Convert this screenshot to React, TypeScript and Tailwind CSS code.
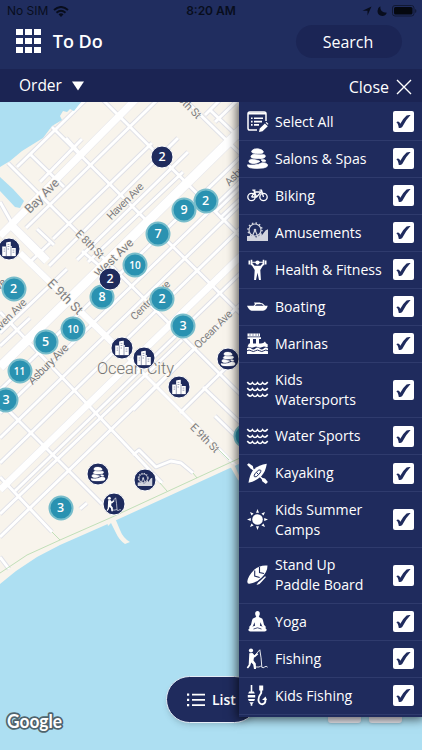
import { useState } from 'react'
import type { ReactNode } from 'react'

type IconName =
  | 'list' | 'stones' | 'bike' | 'ferris' | 'fitness' | 'boat' | 'marina' | 'waves'
  | 'kayak' | 'sun' | 'board' | 'yoga' | 'fishing' | 'tackle' | 'building'

// All icons share a 21x21 box
const icons: Record<IconName, ReactNode> = {
  list: (
    <>
      <path d="M19 10V2.8Q19 1 17.2 1H2.8Q1 1 1 2.8v14.4Q1 19 2.8 19H10" fill="none" stroke="currentColor" strokeWidth="1.5" />
      <path d="M1 1.5h18v2H1zM4 6.5h1.6v1.6H4zM7 6.5h9v1.6H7zM4 9.8h1.6v1.6H4zM7 9.8h8v1.6H7zM4 13.1h1.6v1.6H4zM7 13.1h5v1.6H7z" />
      <path d="M12 21l.7-3.6 5.2-5 2.9 2.9-5.2 5zM18.6 11.7l.9-.8 2 2-.8.9z" />
    </>
  ),
  stones: (
    <g stroke="currentColor" strokeWidth=".7" strokeLinejoin="round">
      <path d="M5 2.6Q7 .2 11 .8q4.500.6 5.300 2.700.3 1.700-1.900 1.900Q9 5.800 6 5.100 3.800 4.300 5 2.600zM4.300 7.600Q6 5.800 9 6.600q5 .3 8.400.1 1.600 1.100.6 2.500-1.500 1.700-6 1.400Q6 10.500 4.500 9.700 3.400 8.800 4.300 7.600zM1.800 12.800Q3 10.500 6.500 11.400q5.500 1 6.500 2-3.200 2.400-7 2.200-4.500-.5-4.200-2.800zM14 11.800q2.800-.7 4.300.3 1 1.300-.8 1.700-2.700.2-3.500-2zM.6 16.800Q3 17.300 7 17q5-.4 8-2.200 4.500-.3 5.700 2 .3 2.500-4.200 3.200-8 .9-13.500-.2-3-.9-2.400-3z" />
    </g>
  ),
  bike: (
    <g fill="none" stroke="currentColor" strokeWidth="1.300">
      <circle cx="4.500" cy="12" r="3.700" />
      <circle cx="16.500" cy="12" r="3.700" />
      <path d="M4.500 12l3.300-5h6.400L9.500 12h-5M6.800 5.200L9.500 12M12.500 5.200h2l2 6.800M5.300 5.200h3.200" />
    </g>
  ),
  ferris: (
    <g opacity=".8">
      <circle cx="8" cy="8" r="6" fill="none" stroke="currentColor" strokeWidth="1.200" />
      <circle cx="8" cy="8" r="7" fill="none" stroke="currentColor" strokeWidth="1.500" strokeDasharray="1.500 2.200" />
      <path d="M8 8L5 15M8 8l3 7" fill="none" stroke="currentColor" strokeWidth="1.200" />
      <circle cx="8" cy="8" r="1.300" />
      <path d="M0 14h7l2 1.500q3-.5 4.500-4.200l1.200.1v2.200l4-5.400 2.300-1V19H0z" />
    </g>
  ),
  fitness: (
    <>
      <circle cx="10.500" cy="3.600" r="2.100" />
      <path d="M1.500 1.500h1.700v4H1.500zM3.700.7h1.600v5.500H3.700zM15.700.7h1.600v5.500h-1.600zM17.800 1.500h1.700v4h-1.700zM5 2.800h11v1H5z" />
      <path d="M3.700 4.500h1.800l2 2.200h6l2-2.200h1.800l-2.800 4.400-1.200 2.100.6 10H12l-1.500-7.300L9 21H7.100l.6-10-1.200-2.100z" />
    </>
  ),
  boat: (
    <>
      <path d="M0 9.800h20.700q-1.200 4.700-4.700 5H4.500Q2 14.200 0 9.800z" />
      <path d="M7 9.800l2.200-2h6l2.300 2" fill="none" stroke="currentColor" strokeWidth="1.100" />
      <path d="M7 6.400h6l2 1.700H7.800z" />
    </>
  ),
  marina: (
    <>
      <path d="M.5.500H13v3H.5zM.5 4.200H14V6H.5zM3 5h3v8H3zM9 5h3v8H9z" />
      <path d="M2 10.500h12q2.500 0 4-2 .5 2.300 2.700 2.800v3L17 13.500l-4 1.300-4-1.300-4 1.300-4.500-1.300z" />
      <path d="M0 15.500q2-1.800 4.200 0t4.200 0 4.200 0 4.200 0 4.200 0V21H0z" />
      <path d="M0 17.800q2-1.500 4.200 0t4.200 0 4.200 0 4.200 0 4.200 0" fill="none" stroke="#1f2b5d" strokeWidth="1" />
      <path d="M3 .500v2.500M6 .500v2.500M9 .500v2.500M11.500 .500v2.500" stroke="#1f2b5d" strokeWidth=".5" />
    </>
  ),
  waves: (
    <g fill="none" stroke="currentColor" strokeWidth="1.600">
      <path d="M.3 3q2.600 4 5.100.6 2.600 3.800 5.100 0 2.500 3.800 5.100 0 2.500 3.400 5.100-.6" />
      <path d="M.3 9q2.600 4 5.100.6 2.600 3.800 5.100 0 2.500 3.800 5.100 0 2.500 3.400 5.100-.6" />
      <path d="M.3 15q2.600 4 5.100.6 2.600 3.800 5.100 0 2.500 3.800 5.100 0 2.500 3.400 5.100-.6" />
    </g>
  ),
  kayak: (
    <>
      <path d="M19.800.800Q10.500 2 5.500 8 2.500 12.500 1.500 19.800 9 18 14.500 13q4.300-4.800 5.300-12.200z" />
      <path d="M3.500 4L17 17.500" stroke="currentColor" strokeWidth="1.500" />
      <path d="M0 1.800L1.800.300l4 2.700.8 3.500L4 6zM14.500 14.800l3.500.6 2.900 3.700-2 1.800-3.700-2.700z" />
      <ellipse cx="10.500" cy="10.400" rx="4.500" ry="1.700" fill="none" stroke="#1f2b5d" strokeWidth=".9" transform="rotate(-48 10.500 10.400)" />
      <path d="M9.500 9.500l2 2" stroke="#1f2b5d" strokeWidth="1" />
    </>
  ),
  sun: (
    <>
      <circle cx="10.500" cy="10.500" r="5.300" />
      <path d="M9 3.800L10.500 0 12 3.800zM9 17.200l1.500 3.800 1.500-3.800zM3.800 9L0 10.500 3.800 12zM17.200 9l3.800 1.500-3.800 1.500zM4.500 6.600L3 3l3.600 1.500zM14.400 4.500L18 3l-1.500 3.600zM4.500 14.400L3 18l3.600-1.500zM14.400 16.500L18 18l-1.500-3.600z" />
    </>
  ),
  board: (
    <>
      <path d="M20.500.500Q12.500-.3 7 5 1 11 .3 16.500q0 2.500 2 2.200 7-.8 12.400-6.300Q20.500 7 20.500.500z" />
      <path d="M12.500 2v5.500l4.500 1M7.700 5.500V11l5 1.500" fill="none" stroke="#1f2b5d" strokeWidth="1.100" />
      <path d="M9.500 20q1-3 4-4.600l4.500-4.200 1 .9-4.300 4.600Q12.500 20 9.500 20z" />
    </>
  ),
  yoga: (
    <>
      <ellipse cx="10.500" cy="2.800" rx="2.300" ry="2.700" />
      <path d="M9.300 5h2.400q.2 1.500 2.300 2 1.700.4 2 2.500l1 4.300 2.200 2.400-1.200.9-3-2.200-1.500-3.600-.6 3.500q5.700 1.300 6.700 3.800.3 1.900-2 1.900H3.400q-2.300 0-2-1.900 1-2.500 6.700-3.800l-.6-3.500L6 14.900l-3 2.200-1.200-.9L4 13.800l1-4.300Q5.300 7.400 7 7q2.100-.5 2.300-2z" />
      <path d="M6.500 18l4-1.200 4 1.200" fill="none" stroke="#1f2b5d" strokeWidth=".8" />
    </>
  ),
  fishing: (
    <>
      <circle cx="4" cy="2.500" r="2.100" />
      <path d="M2.300 5.200l3.200-.2 2 2.300 3-2 .8 1-3.300 3-1 .2-.5 3 2.300 3L9 21H7l-.8-4.500-2-2-1 3.200L1 20.500l-1.300-1 2-2.800z" />
      <path d="M6 9.500L12.800 1.800q1.500 7.500 2 17M7 19h5q1.500-1.500 2.800 0t2.800 0 3 .2" fill="none" stroke="currentColor" strokeWidth=".9" />
    </>
  ),
  tackle: (
    <>
      <path d="M3.700 0h1.600v7H3.700zM2.200 6.500h4.600l1 2H1.200zM.8 10h7.400v2.500H.8zM1 14h7l-.8 2H1.800zM2.300 17.300h4.400L5.300 19v1.800H3.700V19z" />
      <path d="M14.200 5v3q-2.800 3.500-2.800 7 .5 4.200 4 4.200 3.200-.4 3-4.400" fill="none" stroke="currentColor" strokeWidth="1.900" />
      <path d="M12.200.500h4v5h-4zM20 15l-1.500-3.500-3.500 3.500z" />
    </>
  ),
  building: (
    <>
      <path d="M1 7h5.500V1.500L13 0v6.300h1.500V9H20v11.500H1z" />
      <path d="M8.500 4h2.500M8.500 7h2.500M3 10.500h2M3 13.500h2M8.500 10.500h2M15.500 12h2.500M15.500 15h2.500" stroke="#1f2b5d" strokeWidth=".9" strokeOpacity=".7" />
      <path d="M6.700 7v13.500M13.300 7v13.500" stroke="#1f2b5d" strokeWidth=".8" strokeOpacity=".8" />
    </>
  ),
}

function Icon({ name, className }: { name: IconName; className?: string }) {
  return (
    <svg viewBox="0 0 21 21" fill="currentColor" className={className}>
      {icons[name]}
    </svg>
  )
}

const categories: { label: string; icon: IconName; tall?: boolean }[] = [
  { label: 'Select All', icon: 'list' },
  { label: 'Salons & Spas', icon: 'stones' },
  { label: 'Biking', icon: 'bike' },
  { label: 'Amusements', icon: 'ferris' },
  { label: 'Health & Fitness', icon: 'fitness' },
  { label: 'Boating', icon: 'boat' },
  { label: 'Marinas', icon: 'marina' },
  { label: 'Kids Watersports', icon: 'waves', tall: true },
  { label: 'Water Sports', icon: 'waves' },
  { label: 'Kayaking', icon: 'kayak' },
  { label: 'Kids Summer Camps', icon: 'sun', tall: true },
  { label: 'Stand Up Paddle Board', icon: 'board', tall: true },
  { label: 'Yoga', icon: 'yoga' },
  { label: 'Fishing', icon: 'fishing' },
  { label: 'Kids Fishing', icon: 'tackle' },
]

const clusters = [
  { x: 246, y: 436, n: 2 },
  { x: 205.5, y: 200.5, n: 2 },
  { x: 184, y: 210, n: 9 },
  { x: 158, y: 233.5, n: 7 },
  { x: 135, y: 264.5, n: 10 },
  { x: 102, y: 297, n: 8 },
  { x: 162, y: 299, n: 2 },
  { x: 183, y: 326, n: 3 },
  { x: 73, y: 329, n: 10 },
  { x: 45.5, y: 341.5, n: 5 },
  { x: 19.5, y: 371, n: 11 },
  { x: 6, y: 400, n: 3 },
  { x: 13.5, y: 288.5, n: 2 },
  { x: 60.5, y: 507.5, n: 3 },
  { x: 162, y: 157, n: 2, dark: true },
  { x: 110, y: 279, n: 2, dark: true },
]

const places: { x: number; y: number; icon: IconName }[] = [
  { x: 9, y: 248.5, icon: 'building' },
  { x: 121.5, y: 348, icon: 'building' },
  { x: 144, y: 358, icon: 'building' },
  { x: 178.5, y: 386.5, icon: 'building' },
  { x: 228, y: 359, icon: 'stones' },
  { x: 98, y: 473.5, icon: 'stones' },
  { x: 145, y: 480, icon: 'ferris' },
  { x: 113.5, y: 503.5, icon: 'fishing' },
]

const minorRoads = [
  // avenues
  'M17 167L100 86', 'M40 182L82 139', 'M26 228L188 70', 'M30 262L50 243M53 239L152 143',
  'M49 266L178 138', 'M0 333L67 269M77 260L188 152', 'M0 346L30 318M88 262L183 172',
  'M0 390L250 148', 'M0 413L250 172', 'M0 438L250 195', 'M0 463L250 219',
  'M15 491L250 264', 'M0 514L182 340', 'M0 537L250 295', 'M180 413L250 344',
  'M203 387L250 432', 'M133 410L193 350',
  // streets
  'M0 202L13 225', 'M8 163L250 404', 'M30 154L64 187', 'M52 127L250 323',
  'M66 138L83 157', 'M103 100L250 246', 'M180 95L250 163', 'M0 312L162 483',
  'M0 402L102 504', 'M0 477L52 532', 'M0 557L9 569', 'M215 416L250 450',
  'M27 238L44 255M37 229L54 245', 'M210 110L250 148M205 115L222 98M215 122L240 98',
  'M215 212L240 188M220 218L250 190', 'M82 251L101 267',
  'M133 455L139 450L156 467L171 461L181 463L193 473', 'M80 509L87 503',
]

const majorRoads = [
  { d: 'M0 236L136 99', w: 7 },
  { d: 'M0 367L250 121', w: 9 },
  { d: 'M0 490L250 247', w: 6.5 },
  { d: 'M12 226L47 261', w: 8 },
  { d: 'M20 253L115 345', w: 6 },
  { d: 'M115 345L183 413L240 470', w: 3 },
]

const labels = [
  { t: 'Bay Ave', x: 42, y: 196, r: -45, s: 12.5, w: 43 },
  { t: 'Haven Ave', x: 125, y: 201, r: -45, s: 11, w: 47 },
  { t: 'E 8th St', x: 90, y: 244, r: 45, s: 11, w: 35 },
  { t: 'E 9th St', x: 65, y: 297, r: 45, s: 13, w: 44 },
  { t: 'West Ave', x: 114, y: 258, r: -45, s: 12, w: 49 },
  { t: 'Central Ave', x: 150, y: 300, r: -45, s: 10.5, w: 51 },
  { t: 'Ocean Ave', x: 213, y: 329, r: -45, s: 11, w: 49 },
  { t: 'Asbury Ave', x: 48, y: 364, r: -45, s: 11.5, w: 52 },
  { t: 'Haven Ave', x: 7, y: 318, r: -45, s: 11, w: 50 },
  { t: 'E 9th St', x: 205, y: 438, r: 45, s: 11, w: 36 },
  { t: 'E 6th St', x: 187, y: 104, r: 45, s: 11, w: 36 },
  { t: 'Asbury Ave', x: 244, y: 166, r: -45, s: 11, w: 50 },
  { t: 'Haven Ave', x: -13, y: 297, r: -45, s: 11, w: 48 },
]

function CityMap() {
  return (
    <svg viewBox="0 102 422 648" className="block h-[648px] w-[422px]">
      <rect y="102" width="422" height="648" fill="#f8f4ec" />
      <g fill="none" strokeLinejoin="round">
        {minorRoads.map((d) => <path key={d} d={d} stroke="#dfe0e7" strokeWidth="4.600" />)}
        {majorRoads.map((r) => <path key={r.d} d={r.d} stroke="#e8e8ec" strokeWidth={r.w + 1.2} />)}
        {minorRoads.map((d) => <path key={d} d={d} stroke="#fff" strokeWidth="2.900" />)}
        {majorRoads.map((r) => <path key={r.d} d={r.d} stroke="#fff" strokeWidth={r.w} />)}
      </g>
      <path d="M0 102H81L74 111L70 109L67 112L63 111L60 116L62 120L52 126L43 138L22 151L10 161L0 167Z" fill="#addff2" />
      <path d="M0 177L13 189L24 201L20 208L15 207L0 191Z" fill="#addff2" />
      <path d="M0 584L16 571L37 557L60 545L110 523L230 468L422 382V750H0Z" fill="#addff2" />
      <path d="M0 573L27 555L60 540L110 518L240 458M52 532L60 540M160 483L167 491M193 473L197 478M218 449L229 460" fill="none" stroke="#b3d9ab" strokeWidth=".8" />
      <path d="M107 522L115 518L120 530Q123 538 130 542L125 544Q119 540 116 533L111 523L108 526ZM230 466L234 464L242 482L238 480Z" fill="#f8f4ec" />
      <g fill="#7d7d80" stroke="#f8f4ec" strokeWidth="1.500" paintOrder="stroke" textAnchor="middle" fontFamily="Roboto, sans-serif">
        {labels.map((l) => (
          <text key={`${l.t}${l.x}`} transform={`translate(${l.x} ${l.y}) rotate(${l.r})`} y="4" fontSize={l.s} textLength={l.w}>
            {l.t}
          </text>
        ))}
        <text x="135.500" y="374" fontSize="16.500" textLength="77" fontWeight="300" fill="#747474">Ocean City</text>
      </g>
    </svg>
  )
}

function FilterRow({ label, icon, tall }: { label: string; icon: IconName; tall?: boolean }) {
  const [checked, setChecked] = useState(true)

  return (
    <li className={`flex shrink-0 items-center border-b border-[#2f3b6d] pl-[7.500px] pr-[8.500px] ${tall ? 'h-[55.700px]' : 'h-[37px]'}`}>
      <Icon name={icon} className="h-[21px] w-[21px] shrink-0 overflow-visible" />
      <span className="ml-[7.500px] w-[109px] text-[14.100px] leading-5">{label}</span>
      <button
        aria-label={label}
        onClick={() => setChecked(!checked)}
        className="ml-auto h-[20.500px] w-[20.500px] shrink-0 rounded-[2px] bg-white text-[#1f2b5d]"
      >
        {checked && (
          <svg viewBox="0 0 20.500 20.500" fill="currentColor" className="block h-full w-full">
            <path d="M3.300 11.200Q5.800 9.200 7.300 12.800Q10.600 7 13.600 4.600Q15.200 3.700 17.600 4Q13 8.400 9.200 16Q7.700 17.600 5.800 16.900Q5.200 12.500 3.300 11.200Z" />
          </svg>
        )}
      </button>
    </li>
  )
}

export default function App() {
  return (
    <div className="relative flex h-[750px] w-[422px] flex-col overflow-hidden bg-[#addff2] font-['Open_Sans',sans-serif] text-white">
      <header className="relative z-10 flex h-[69px] shrink-0 flex-col bg-[#202d5f]">
        {/* Status bar */}
        <div className="grid h-[22px] grid-cols-3 items-center pl-[7px] pr-[5px] font-['Inter',sans-serif] text-[12px] text-[#080d1d]">
          <div className="flex items-center gap-[5px]">
            <span>No SIM</span>
            <svg viewBox="0 0 16 11" className="h-[11px] w-4" fill="none" stroke="currentColor" strokeWidth="2">
              <path d="M1 4q7-6 14 0M3.500 6.700q4.500-3.800 9 0" />
              <path d="M5.500 8.200q2.500-1.800 5 0L8 11z" fill="currentColor" stroke="none" />
            </svg>
          </div>
          <span className="pr-[2px] text-center font-semibold">8:20 AM</span>
          <div className="flex items-center justify-end gap-[5px]">
            <svg viewBox="0 0 10 10" className="h-[10px] w-[10px]" fill="currentColor">
              <path d="M9.500.500L5.500 9.500V4.700H.500z" />
            </svg>
            <svg viewBox="0 0 10 10" className="h-[10px] w-[10px]" fill="currentColor">
              <path d="M3.300.300Q2.700 6.700 9.800 6.700 8.500 10 5.300 10 .500 9.700.500 5 .700 1.500 3.300.300z" />
            </svg>
            <svg viewBox="0 0 25 12" className="h-3 w-[25px]">
              <rect x=".5" y=".5" width="21.500" height="10.500" rx="2.500" fill="none" stroke="#111934" />
              <rect x="2" y="2" width="18.500" height="7.500" rx="1.500" fill="#05080f" />
              <path d="M23.200 4v4q1.200-.5 1.200-2t-1.200-2z" fill="#111934" />
            </svg>
          </div>
        </div>
        <div className="flex h-[38px] items-center pl-4 pr-5">
          <div className="grid grid-cols-3 gap-[2.500px]">
            {[...Array(9)].map((_, i) => (
              <span key={i} className="h-[6.600px] w-[6.600px] bg-white" />
            ))}
          </div>
          <h1 className="ml-3 text-[18px] font-semibold">To Do</h1>
          <button className="ml-auto h-[33px] w-[106px] rounded-full bg-[#1b2555] pr-[2px] pt-[2px] text-[16px]">Search</button>
        </div>
      </header>

      <div className="relative z-10 flex h-[33px] shrink-0 items-center justify-between bg-[#1b2453] pl-[19px] pr-[10px]">
        <button className="flex items-center gap-[10px] text-[15.500px]">
          Order
          <svg viewBox="0 0 12 10" className="h-[10px] w-3" fill="currentColor">
            <path d="M0 .500h12L6 9.500z" />
          </svg>
        </button>
        <button className="flex items-center gap-[7px] pt-[2px] text-[16px]">
          Close
          <svg viewBox="0 0 16 16" className="h-4 w-4" stroke="currentColor" strokeWidth="1.400">
            <path d="M1 1l14 14M15 1L1 15" />
          </svg>
        </button>
      </div>

      <main className="relative h-[648px]">
        <CityMap />

        {/* Map pins, coordinates are relative to the screen */}
        {clusters.map((c) => (
          <div
            key={`${c.x}-${c.y}`}
            style={{ left: c.x, top: c.y - 102 }}
            className={`absolute flex -translate-x-1/2 -translate-y-1/2 items-center justify-center rounded-full font-semibold ${
              c.dark
                ? 'h-[23px] w-[23px] border border-white bg-[#1f2b5d]'
                : 'h-[25px] w-[25px] border-2 border-[#78bdcb] bg-[#2a92b1]'
            } ${c.n > 9 ? 'text-[10px]' : 'text-[12.500px]'}`}
          >
            {c.n}
          </div>
        ))}
        {places.map((p) => (
          <div
            key={`${p.x}-${p.y}`}
            style={{ left: p.x, top: p.y - 102 }}
            className="absolute flex h-[23px] w-[23px] -translate-x-1/2 -translate-y-1/2 items-center justify-center rounded-full border border-white bg-[#1f2b5d]"
          >
            <Icon name={p.icon} className="h-[15px] w-[15px]" />
          </div>
        ))}

        <svg viewBox="0 0 64 26" className="absolute bottom-[13px] left-[2px] h-[26px] w-16">
          <text x="5" y="16.500" fontSize="18" fontWeight="700" textLength="55" lengthAdjust="spacingAndGlyphs" fontFamily="Lato, sans-serif" fill="#fff" stroke="#4f636c" strokeWidth="3.600" strokeLinejoin="round" paintOrder="stroke">
            Google
          </text>
        </svg>

        <button className="absolute bottom-[27px] left-[166px] flex h-[47px] w-[92px] items-center gap-[7px] rounded-full border-[1.500px] border-[#e5edf7] bg-[#1f2b5d] pl-5 text-[14px] font-semibold shadow-md">
          <svg viewBox="0 0 18 14" className="h-[14px] w-[18px] shrink-0" fill="currentColor">
            <path d="M0 .500h2.200v2.200H0zM5 .800h13v1.700H5zM0 5.800h2.200V8H0zM5 6h13v1.700H5zM0 11h2.200v2.200H0zM5 11.300h13V13H5z" />
          </svg>
          List
        </button>
        <div className="absolute bottom-[27px] left-[328px] flex gap-2">
          <span className="h-8 w-[33px] rounded-[3px] bg-[#e9e7ee] shadow" />
          <span className="h-8 w-[33px] rounded-[3px] bg-[#e9e7ee] shadow" />
        </div>

        {/* Category filter */}
        <ul className="absolute right-0 top-0 flex h-[615px] w-[183px] flex-col bg-[#1f2b5d] pt-[1.600px] shadow-[0_0_10px_2px_rgba(0,0,0,0.65)]">
          {categories.map((c) => (
            <FilterRow key={c.label} {...c} />
          ))}
        </ul>
      </main>
    </div>
  )
}
